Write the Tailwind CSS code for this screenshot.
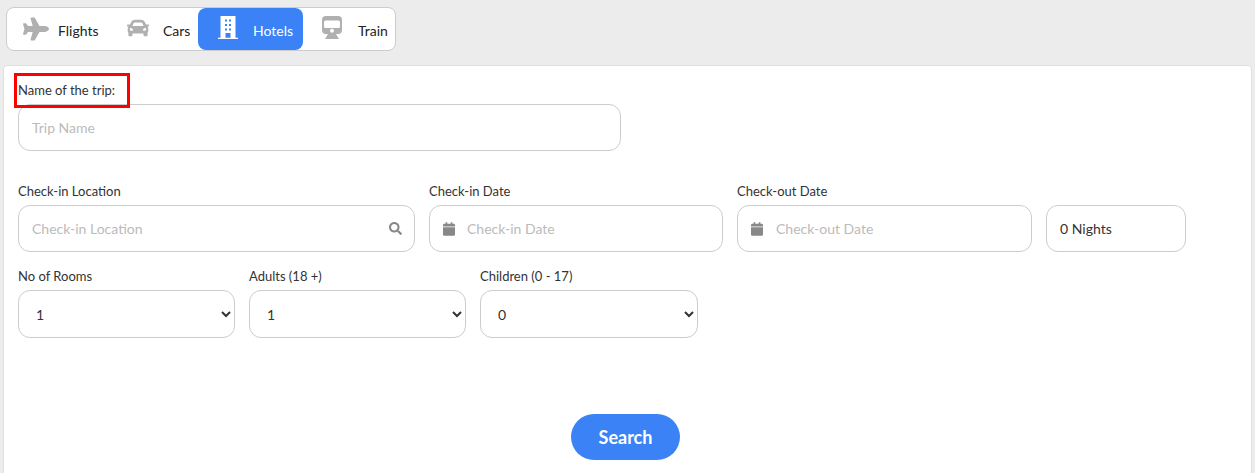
<!DOCTYPE html>
<html lang="en">
<head>
    <meta charset="UTF-8">
    <title>Hotels</title>
    <script src="https://cdn.jsdelivr.net/npm/@tailwindcss/browser@4"></script>
</head>
<body class="bg-[#ececec] h-[473px] overflow-hidden font-['Lato','Noto_Sans',sans-serif] text-[14px] text-[#333]">
    <!-- Tabs -->
    <div class="pt-[7px] pl-[6px] h-[65px]">
        <nav class="inline-flex h-[44px] w-[390px] bg-white border border-[#ccc] rounded-lg text-[#222]">
            <a href="#" class="flex items-center w-[96px] pl-[16px]">
                <svg class="w-[26px] h-[24px] fill-[#b0b0b0] mr-[9px]" viewBox="0 0 576 512"><path d="M480 192H365.71L260.61 8.06A16.014 16.014 0 0 0 246.71 0h-65.5c-10.63 0-18.3 10.17-15.38 20.39L214.86 192H112l-43.2-57.6c-3.02-4.03-7.77-6.4-12.8-6.4H16.01C5.6 128-2.04 137.78.49 147.88L32 256 .49 364.12C-2.04 374.22 5.6 384 16.01 384H56c5.04 0 9.78-2.37 12.8-6.4L112 320h102.86l-49.03 171.6c-2.92 10.22 4.75 20.4 15.38 20.4h65.5c5.74 0 11.04-3.08 13.89-8.06L365.71 320H480c35.35 0 96-28.65 96-64s-60.65-64-96-64z"/></svg>
                <span class="pt-[3px]">Flights</span>
            </a>
            <a href="#" class="flex items-center w-[95px] pl-[24px]">
                <svg class="w-[22px] h-[22px] fill-[#b0b0b0] mr-[14px] -mt-[3px]" viewBox="0 0 512 512"><path d="M499.99 176h-59.87l-16.64-41.6C406.38 91.63 365.57 64 319.5 64h-127c-46.06 0-86.88 27.63-103.99 70.4L71.87 176H12.01C4.2 176-1.53 183.34.37 190.91l6 24C7.7 220.25 12.5 224 18.01 224h20.07C24.65 235.73 16 252.78 16 272v48c0 16.12 6.16 30.67 16 41.93V416c0 17.67 14.33 32 32 32h32c17.67 0 32-14.33 32-32v-32h256v32c0 17.67 14.33 32 32 32h32c17.67 0 32-14.33 32-32v-54.07c9.84-11.25 16-25.8 16-41.93v-48c0-19.22-8.65-36.27-22.07-48H494c5.51 0 10.31-3.75 11.64-9.09l6-24c1.89-7.57-3.84-14.91-11.65-14.91zm-352.06-17.83c7.29-18.22 24.94-30.17 44.57-30.17h127c19.63 0 37.28 11.95 44.57 30.17L384 208H128l19.93-49.83zM96 319.8c-19.2 0-32-12.76-32-31.9S76.8 256 96 256s48 28.71 48 47.85-28.8 15.95-48 15.95zm320 0c-19.2 0-48 3.19-48-15.95S396.8 256 416 256s32 12.76 32 31.9-12.8 31.9-32 31.9z"/></svg>
                <span class="pt-[3px]">Cars</span>
            </a>
            <a href="#" class="flex items-center w-[105px] h-[42px] pl-[20px] bg-[#3b82f6] text-white rounded-lg">
                <svg class="w-[20px] h-[23px] fill-white mr-[15px] -mt-[3px]" viewBox="0 0 20 23"><path fill-rule="evenodd" d="M2.500 0h15v21.700H20V23H0v-1.300h2.500zM7 3.500v2h2v-2zm4 0v2h2v-2zM7 8v2h2V8zm4 0v2h2V8zm-4 4.500v2h2v-2zm4 0v2h2v-2zM7.500 17v4.700h5V17z"/></svg>
                <span class="pt-[3px]">Hotels</span>
            </a>
            <a href="#" class="flex items-center flex-1 pl-[19px]">
                <svg class="w-[20px] h-[23px] fill-[#b0b0b0] mr-[16px] -mt-[3px]" viewBox="0 0 20 23"><path fill-rule="evenodd" d="M4 0h12a4 4 0 0 1 4 4v10a4 4 0 0 1-4 4H4a4 4 0 0 1-4-4V4a4 4 0 0 1 4-4zM3.500 4.500A1.500 1.500 0 0 0 2 6v4.500A1.500 1.500 0 0 0 3.500 12h13a1.500 1.500 0 0 0 1.500-1.500V6a1.500 1.500 0 0 0-1.500-1.500zM10 12.800a2 2 0 1 0 0 4 2 2 0 0 0 0-4zM3 23l3-5h8l3 5z"/></svg>
                <span class="pt-[3px]">Train</span>
            </a>
        </nav>
    </div>

    <!-- Form card -->
    <main class="relative ml-[3px] mr-[3px] h-[420px] bg-white rounded-t border border-[#e0e0e0] pl-[14px] pt-[16px]">
        <div class="absolute left-[10px] top-[7px] w-[116px] h-[35px] border-[3px] border-[#f00]"></div>

        <label class="block h-[22px] leading-[16px] text-[13px]">Name of the trip:</label>
        <input type="text" placeholder="Trip Name" class="block w-[603px] h-[47px] bg-white border border-[#ccc] rounded-xl px-[13px] placeholder:text-[#bbb] outline-none">

        <div class="flex gap-[14px] mt-[32px]">
            <div class="w-[397px]">
                <label class="block h-[22px] leading-[16px] text-[13px]">Check-in Location</label>
                <div class="flex items-center h-[47px] border border-[#ccc] rounded-xl pl-[13px] pr-[12px]">
                    <span class="flex-1 text-[#bbb]">Check-in Location</span>
                    <svg class="w-[13px] h-[13px] fill-[#888]" viewBox="0 0 512 512"><path d="M505 442.700L405.300 343c-4.500-4.500-10.600-7-17-7H372c27.600-35.300 44-79.700 44-128C416 93.100 322.900 0 208 0S0 93.100 0 208s93.100 208 208 208c48.300 0 92.700-16.400 128-44v16.300c0 6.400 2.500 12.500 7 17l99.700 99.700c9.400 9.400 24.600 9.400 33.900 0l28.300-28.300c9.400-9.400 9.400-24.600.1-34zM208 336c-70.700 0-128-57.200-128-128 0-70.700 57.200-128 128-128 70.700 0 128 57.200 128 128 0 70.700-57.200 128-128 128z"/></svg>
                </div>
            </div>
            <div class="w-[294px]">
                <label class="block h-[22px] leading-[16px] text-[13px]">Check-in Date</label>
                <div class="flex items-center h-[47px] border border-[#ccc] rounded-xl pl-[13px]">
                    <svg class="w-[12px] h-[14px] fill-[#888] mr-[12px]" viewBox="0 0 448 512"><path d="M12 192h424c6.600 0 12 5.400 12 12v260c0 26.500-21.500 48-48 48H48c-26.500 0-48-21.500-48-48V204c0-6.600 5.400-12 12-12zm436-44v-36c0-26.500-21.500-48-48-48h-48V12c0-6.600-5.400-12-12-12h-40c-6.600 0-12 5.400-12 12v52H160V12c0-6.600-5.400-12-12-12h-40c-6.600 0-12 5.400-12 12v52H48C21.500 64 0 85.500 0 112v36c0 6.600 5.400 12 12 12h424c6.600 0 12-5.400 12-12z"/></svg>
                    <span class="text-[#bbb]">Check-in Date</span>
                </div>
            </div>
            <div class="w-[295px]">
                <label class="block h-[22px] leading-[16px] text-[13px]">Check-out Date</label>
                <div class="flex items-center h-[47px] border border-[#ccc] rounded-xl pl-[13px]">
                    <svg class="w-[12px] h-[14px] fill-[#888] mr-[13px]" viewBox="0 0 448 512"><path d="M12 192h424c6.600 0 12 5.400 12 12v260c0 26.500-21.500 48-48 48H48c-26.500 0-48-21.500-48-48V204c0-6.600 5.400-12 12-12zm436-44v-36c0-26.500-21.500-48-48-48h-48V12c0-6.600-5.400-12-12-12h-40c-6.600 0-12 5.400-12 12v52H160V12c0-6.600-5.400-12-12-12h-40c-6.600 0-12 5.400-12 12v52H48C21.500 64 0 85.500 0 112v36c0 6.600 5.400 12 12 12h424c6.600 0 12-5.400 12-12z"/></svg>
                    <span class="text-[#bbb]">Check-out Date</span>
                </div>
            </div>
            <div class="w-[140px] pt-[22px]">
                <div class="flex items-center h-[47px] border border-[#ccc] rounded-xl pl-[13px]">0 Nights</div>
            </div>
        </div>

        <div class="flex gap-[14px] mt-[15px]">
            <div class="w-[217px]">
                <label class="block h-[23px] leading-[18px] text-[13px]">No of Rooms</label>
                <select class="w-full h-[48px] bg-white border border-[#ccc] rounded-xl pl-[13px]"><option>1</option></select>
            </div>
            <div class="w-[217px]">
                <label class="block h-[23px] leading-[18px] text-[13px]">Adults (18 +)</label>
                <select class="w-full h-[48px] bg-white border border-[#ccc] rounded-xl pl-[13px]"><option>1</option></select>
            </div>
            <div class="w-[218px]">
                <label class="block h-[23px] leading-[18px] text-[13px]">Children (0 - 17)</label>
                <select class="w-full h-[48px] bg-white border border-[#ccc] rounded-xl pl-[13px]"><option>0</option></select>
            </div>
        </div>

        <div class="flex justify-center w-[1215px] mt-[76px]">
            <button class="w-[109px] h-[46px] rounded-full bg-[#3b82f6] text-white text-[18px] font-bold">Search</button>
        </div>
    </main>
</body>
</html>
